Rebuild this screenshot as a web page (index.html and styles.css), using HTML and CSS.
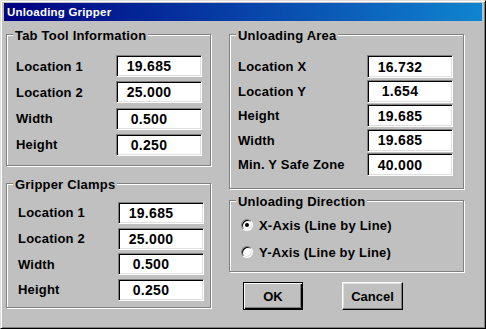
FILE: index.html
```html
<!DOCTYPE html>
<html lang="en">
<head>
    <meta charset="UTF-8">
    <title>Unloading Gripper</title>
    <link rel="stylesheet" href="styles.css">
</head>
<body>
    <div class="window">
        <div class="titlebar">Unloading Gripper</div>
        <div class="content">
            <div class="col col-left">
                <div class="group group-tab">
                    <span class="legend">Tab Tool Information</span>
                    <div class="fields">
                        <div class="field"><span class="label">Location 1</span><input class="input" type="text" value="19.685" readonly></div>
                        <div class="field"><span class="label">Location 2</span><input class="input" type="text" value="25.000" readonly></div>
                        <div class="field"><span class="label">Width</span><input class="input" type="text" value="0.500" readonly></div>
                        <div class="field"><span class="label">Height</span><input class="input" type="text" value="0.250" readonly></div>
                    </div>
                </div>
                <div class="group group-clamps">
                    <span class="legend">Gripper Clamps</span>
                    <div class="fields">
                        <div class="field"><span class="label">Location 1</span><input class="input" type="text" value="19.685" readonly></div>
                        <div class="field"><span class="label">Location 2</span><input class="input" type="text" value="25.000" readonly></div>
                        <div class="field"><span class="label">Width</span><input class="input" type="text" value="0.500" readonly></div>
                        <div class="field"><span class="label">Height</span><input class="input" type="text" value="0.250" readonly></div>
                    </div>
                </div>
            </div>
            <div class="col col-right">
                <div class="group group-area">
                    <span class="legend">Unloading Area</span>
                    <div class="fields">
                        <div class="field"><span class="label">Location X</span><input class="input" type="text" value="16.732" readonly></div>
                        <div class="field"><span class="label">Location Y</span><input class="input" type="text" value="1.654" readonly></div>
                        <div class="field"><span class="label">Height</span><input class="input" type="text" value="19.685" readonly></div>
                        <div class="field"><span class="label">Width</span><input class="input" type="text" value="19.685" readonly></div>
                        <div class="field"><span class="label">Min. Y Safe Zone</span><input class="input" type="text" value="40.000" readonly></div>
                    </div>
                </div>
                <div class="group group-direction">
                    <span class="legend">Unloading Direction</span>
                    <div class="options">
                        <div class="option"><span class="radio checked"></span>X-Axis (Line by Line)</div>
                        <div class="option"><span class="radio"></span>Y-Axis (Line by Line)</div>
                    </div>
                </div>
                <div class="buttons">
                    <button class="button button-default" type="button">OK</button>
                    <button class="button" type="button">Cancel</button>
                </div>
            </div>
        </div>
    </div>
</body>
</html>
```

FILE: styles.css
```css
body {
    margin: 0;
    background: #c0c0c0;
    font-family: "Liberation Sans", Arial, sans-serif;
    font-weight: bold;
    font-size: 13px;
    letter-spacing: 0.2px;
    color: #000;
}

.window {
    width: 486px;
    height: 329px;
    box-sizing: border-box;
    background: #c0c0c0;
    border: 1px solid;
    border-color: #dfdfdf #000 #000 #dfdfdf;
    box-shadow: inset 1px 1px #fff, inset -1px -1px #808080;
    padding: 2px 3px 3px 3px;
}

.titlebar {
    height: 18px;
    line-height: 18px;
    padding-left: 3px;
    font-size: 11.5px;
    color: #fff;
    background: linear-gradient(to right, #000080, #1084d0);
}

.content {
    display: flex;
    gap: 18px;
    padding-left: 2px;
}

.col-left {
    width: 205px;
    margin-top: 13px;
}

.col-right {
    width: 235px;
    margin-top: 13px;
}

/* etched frame */
.group {
    border: 1px solid #808080;
    box-shadow: inset 1px 1px #fff, 1px 1px #fff;
}

.legend {
    display: table;
    margin-top: -7px;
    padding: 0 2px;
    line-height: 15px;
    background: #c0c0c0;
}

.fields {
    display: flex;
    flex-direction: column;
}

.field {
    display: flex;
    align-items: center;
}

.input {
    box-sizing: border-box;
    width: 86px;
    margin: 0;
    padding: 0 20px 0 0;
    font: inherit;
    font-size: 14px;
    letter-spacing: 0.3px;
    text-align: center;
    color: #000;
    background: #fff;
    border: 1px solid;
    border-color: #808080 #fff #fff #808080;
    box-shadow: inset 1px 1px #000, inset -1px -1px #dfdfdf;
    outline: none;
}

.group-tab {
    padding: 0 0 9px 9px;
}

.group-tab .legend {
    margin-left: -3px;
}

.group-tab .fields {
    margin-top: 12px;
    gap: 4.33px;
}

.group-tab .label {
    width: 100px;
}

.group-tab .input {
    height: 22px;
}

.group-clamps {
    margin-top: 17px;
    padding: 0 0 6px 11px;
}

.group-clamps .legend {
    margin-left: -5px;
}

.group-clamps .fields {
    margin-top: 10px;
    gap: 3.67px;
}

.group-clamps .label {
    width: 100px;
}

.group-clamps .input {
    height: 22px;
}

.group-area {
    padding: 0 0 12px 8px;
}

.group-area .legend {
    margin-left: -2px;
}

.group-area .fields {
    margin-top: 12px;
    gap: 1.5px;
}

.group-area .label {
    width: 129px;
}

.group-area .input {
    height: 23px;
}

.group-direction {
    margin-top: 11px;
    padding: 0 0 11px 12px;
}

.group-direction .legend {
    margin-left: -6px;
}

.options {
    display: flex;
    flex-direction: column;
    gap: 11px;
    margin-top: 8px;
}

.option {
    display: flex;
    align-items: center;
    height: 16px;
}

.radio {
    position: relative;
    box-sizing: border-box;
    width: 12px;
    height: 12px;
    margin: 0 6px 0 -1px;
    border-radius: 50%;
    background: #fff;
    border: 1px solid;
    border-color: #808080 #fff #fff #808080;
    box-shadow: inset 1px 1px #000, inset -1px -1px #dfdfdf;
}

.radio.checked::after {
    content: "";
    position: absolute;
    left: 3px;
    top: 3px;
    width: 4px;
    height: 4px;
    border-radius: 50%;
    background: #000;
}

.buttons {
    display: flex;
    gap: 39px;
    margin: 10px 0 0 14px;
}

.button {
    box-sizing: border-box;
    width: 61px;
    height: 28px;
    padding: 0;
    font: inherit;
    color: #000;
    background: #c0c0c0;
    border: 1px solid;
    border-color: #fff #000 #000 #fff;
    box-shadow: inset -1px -1px #808080, inset 1px 1px #dfdfdf;
}

.button-default {
    width: 60px;
    border-color: #000;
    box-shadow: inset 1px 1px #fff, inset -1px -1px #000, inset -2px -2px #808080;
}
```
